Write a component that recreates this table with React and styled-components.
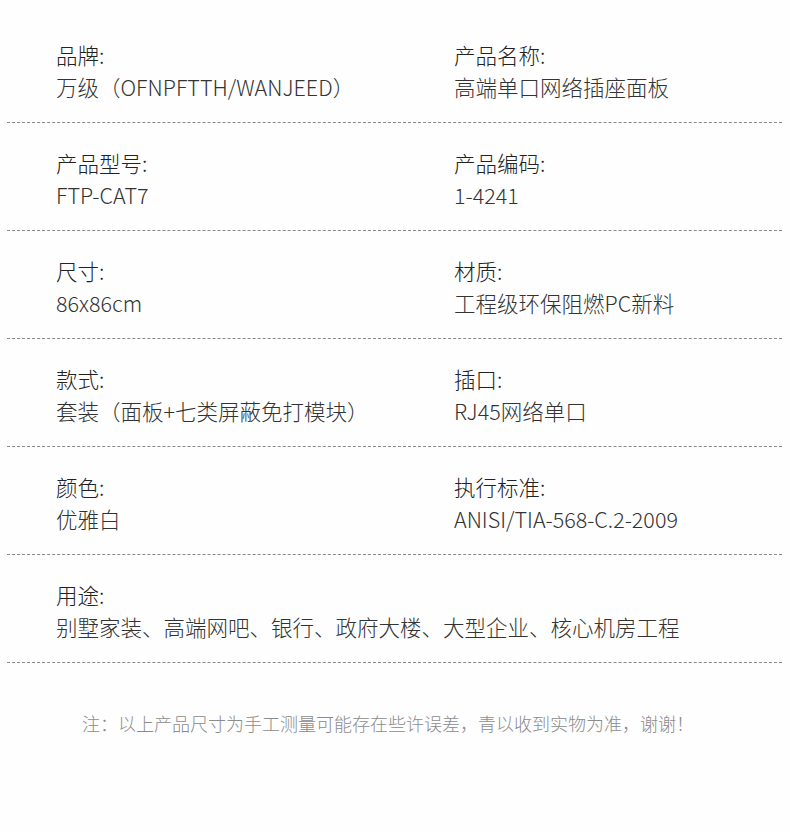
import React from "react";
import styled, { createGlobalStyle } from "styled-components";

const GlobalStyle = createGlobalStyle`
  html, body {
    margin: 0;
    padding: 0;
    background: #fefefe;
  }
  body {
    font-family: "Noto Sans CJK SC", "Noto Sans", sans-serif;
  }
`;

const Page = styled.div`
  width: 790px;
  height: 832px;
  box-sizing: border-box;
  padding: 15px 8px 0 7px;
  color: #333333;
`;

const Row = styled.div`
  display: grid;
  grid-template-columns: ${(props) => (props.full ? "1fr" : "398px 1fr")};
  padding: 24px 0 19px 49px;
  border-bottom: 1px dashed #8a8a8a;
`;

const Cell = styled.div`
  display: flex;
  flex-direction: column;
`;

const Label = styled.div`
  font-size: 21.5px;
  line-height: 32px;
  font-weight: 300;
  color: #222222;
  white-space: nowrap;
`;

const Value = styled.div`
  font-size: 21.5px;
  line-height: 32px;
  font-weight: 300;
  white-space: nowrap;
`;

const Note = styled.div`
  margin-top: 46px;
  padding-left: 75px;
  font-size: 18px;
  line-height: 28px;
  color: #8c8c8c;
  font-weight: 300;
  white-space: nowrap;
`;

const rows = [
  [
    ["品牌:", "万级（OFNPFTTH/WANJEED）"],
    ["产品名称:", "高端单口网络插座面板"],
  ],
  [
    ["产品型号:", "FTP-CAT7"],
    ["产品编码:", "1-4241"],
  ],
  [
    ["尺寸:", "86x86cm"],
    ["材质:", "工程级环保阻燃PC新料"],
  ],
  [
    ["款式:", "套装（面板+七类屏蔽免打模块）"],
    ["插口:", "RJ45网络单口"],
  ],
  [
    ["颜色:", "优雅白"],
    ["执行标准:", "ANISI/TIA-568-C.2-2009"],
  ],
  [["用途:", "别墅家装、高端网吧、银行、政府大楼、大型企业、核心机房工程"]],
];

export default function App() {
  return (
    <>
      <GlobalStyle />
      <Page>
        {rows.map((row, i) => (
          <Row key={i} full={row.length === 1}>
            {row.map(([label, value]) => (
              <Cell key={label}>
                <Label>{label}</Label>
                <Value>{value}</Value>
              </Cell>
            ))}
          </Row>
        ))}
        <Note>
          注：以上产品尺寸为手工测量可能存在些许误差，青以收到实物为准，谢谢！
        </Note>
      </Page>
    </>
  );
}
